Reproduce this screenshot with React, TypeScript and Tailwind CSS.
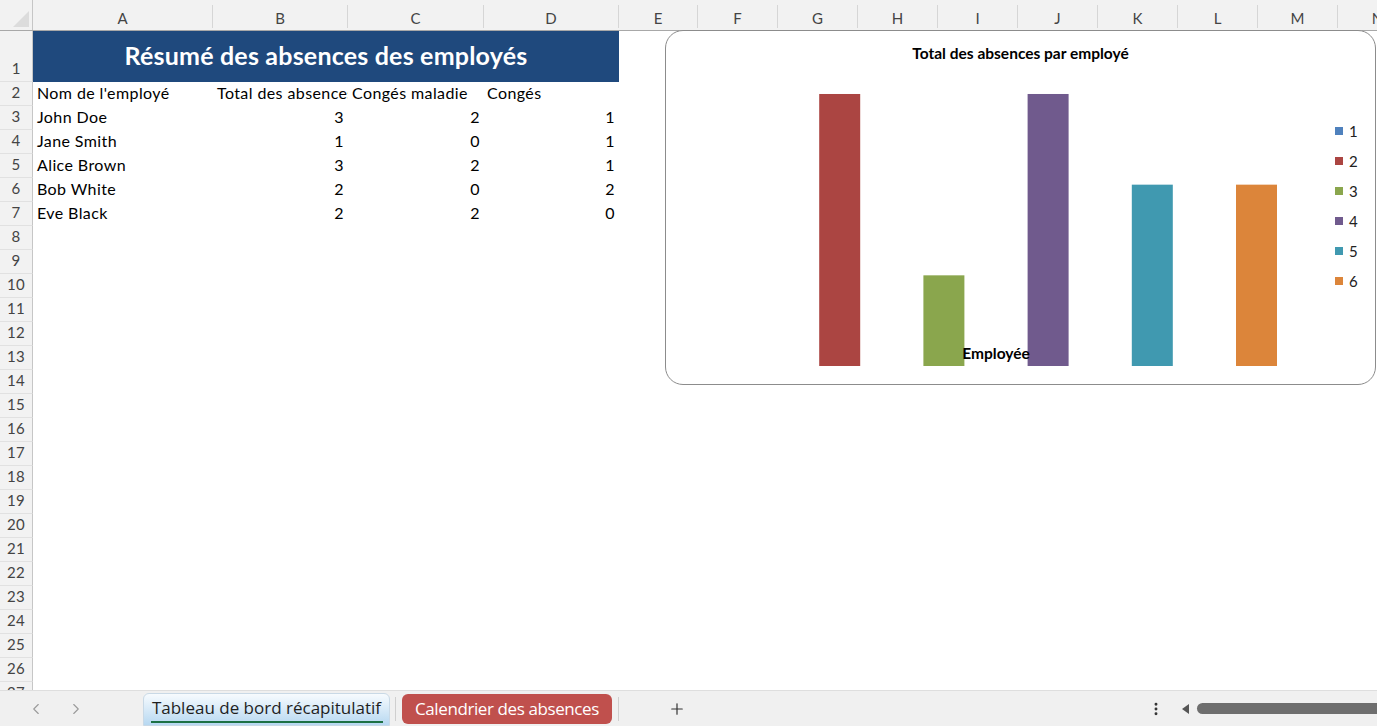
import { ChevronLeft, ChevronRight, Plus, MoreVertical } from 'lucide-react';

const cols = [
  { id: 'A', w: 'w-[180px]' },
  { id: 'B', w: 'w-[135px]' },
  { id: 'C', w: 'w-[136px]' },
  { id: 'D', w: 'w-[135px]' },
  { id: 'E', w: 'w-[79px]' },
  { id: 'F', w: 'w-[80px]' },
  { id: 'G', w: 'w-[80px]' },
  { id: 'H', w: 'w-[80px]' },
  { id: 'I', w: 'w-[80px]' },
  { id: 'J', w: 'w-[80px]' },
  { id: 'K', w: 'w-[80px]' },
  { id: 'L', w: 'w-[80px]' },
  { id: 'M', w: 'w-[80px]' },
  { id: 'N', w: 'w-[80px]' },
];

const employees = [
  { name: 'John Doe', total: 3, sick: 2, leave: 1 },
  { name: 'Jane Smith', total: 1, sick: 0, leave: 1 },
  { name: 'Alice Brown', total: 3, sick: 2, leave: 1 },
  { name: 'Bob White', total: 2, sick: 0, leave: 2 },
  { name: 'Eve Black', total: 2, sick: 2, leave: 0 },
];

const series = [
  { label: '1', color: '#4f81bd', value: 0 },
  { label: '2', color: '#ab4542', value: 3 },
  { label: '3', color: '#8aa64d', value: 1 },
  { label: '4', color: '#705a8d', value: 3 },
  { label: '5', color: '#4099b0', value: 2 },
  { label: '6', color: '#dc853a', value: 2 },
];

function RowHead({ n, h = 'h-[24px]' }: { n: number; h?: string }) {
  return (
    <div
      className={`${h} w-[33px] shrink-0 flex items-end justify-center pb-[3px] bg-[#f2f2f2] border-r border-r-[#c6c6c6] border-b border-b-[#e1e1e1] text-[15px] leading-[20px] text-[#444]`}
    >
      {n}
    </div>
  );
}

function Chart() {
  const base = 335;
  const unit = 90.67;
  return (
    <div className="absolute left-[665px] top-[30px] w-[711px] h-[355px] bg-white border border-[#8c8c8c] rounded-[18px]">
      <div className="absolute top-[11px] left-0 right-0 text-center text-[15.5px] font-bold text-black">
        Total des absences par employé
      </div>
      <svg className="absolute left-0 top-0" width="709" height="353">
        {series.map((s, i) => {
          const h = s.value * unit;
          return (
            <rect
              key={s.label}
              x={49 + i * 104.2}
              y={base - h}
              width={41}
              height={h}
              fill={s.color}
            />
          );
        })}
      </svg>
      <div className="absolute left-[286px] top-[311px] w-[88px] text-center text-[15.5px] font-bold text-black">
        Employée
      </div>
      <div className="absolute left-[669px] top-[90px] flex flex-col gap-[10px]">
        {series.map((s) => (
          <div key={s.label} className="h-[20px] flex items-center gap-[6px] text-[15px] text-[#222]">
            <span className="w-[8px] h-[8px]" style={{ background: s.color }} />
            <span>{s.label}</span>
          </div>
        ))}
      </div>
    </div>
  );
}

const cell = 'h-[24px] flex items-end pb-[3px] leading-[20px] whitespace-nowrap overflow-hidden';

export default function App() {
  const bodyRows = Array.from({ length: 25 }, (_, i) => i + 3);

  return (
    <div
      className="relative w-[1377px] h-[726px] overflow-hidden bg-white"
      style={{ fontFamily: 'Lato, "Noto Sans", sans-serif' }}
    >
      {/* Column headers */}
      <div className="flex h-[31px] bg-[#f2f2f2] border-b border-b-[#a8a8a8]">
        <div className="w-[33px] shrink-0 relative border-r border-r-[#c6c6c6]">
          <div className="absolute right-[3px] bottom-[3px] w-0 h-0 border-l-[16px] border-l-transparent border-b-[16px] border-b-[#dcdcdc]" />
        </div>
        {cols.map((c) => (
          <div key={c.id} className={`${c.w} shrink-0 flex items-end pb-[2px]`}>
            <div className="flex-1 text-center text-[15px] leading-[20px] text-[#444]">{c.id}</div>
            <div className="w-px h-[23px] bg-[#d6d6d6]" />
          </div>
        ))}
      </div>

      {/* Row 1 - title */}
      <div className="flex">
        <RowHead n={1} h="h-[51px]" />
        <div className="w-[586px] h-[51px] shrink-0 bg-[#1f497d] flex items-center justify-center pb-[1px]">
          <span className="text-white text-[25px] font-bold tracking-[0.2px]">Résumé des absences des employés</span>
        </div>
      </div>

      {/* Row 2 - headers */}
      <div className="flex text-[16px] tracking-[0.4px] text-black">
        <RowHead n={2} />
        <div className={`w-[180px] pl-[4px] ${cell}`}>Nom de l'employé</div>
        <div className={`w-[135px] pl-[4px] ${cell}`}>Total des absences</div>
        <div className={`w-[136px] pl-[4px] ${cell}`}>Congés maladie</div>
        <div className={`w-[135px] pl-[3px] ${cell}`}>Congés</div>
      </div>

      {/* Data rows and empty rows */}
      {bodyRows.map((n) => {
        const e = employees[n - 3];
        return (
          <div key={n} className="flex text-[16px] tracking-[0.4px] text-black">
            <RowHead n={n} />
            {e && (
              <>
                <div className={`w-[180px] pl-[4px] ${cell}`}>{e.name}</div>
                <div className={`w-[135px] justify-end pr-[4px] ${cell}`}>{e.total}</div>
                <div className={`w-[136px] justify-end pr-[4px] ${cell}`}>{e.sick}</div>
                <div className={`w-[135px] justify-end pr-[4px] ${cell}`}>{e.leave}</div>
              </>
            )}
          </div>
        );
      })}

      <Chart />

      {/* Sheet tabs bar */}
      <div className="absolute left-0 right-0 top-[690px] h-[36px] bg-[#f0f0f0] border-t border-t-[#dedede] flex items-center">
        <div className="w-[140px] flex items-center gap-[22px] pl-[27px] text-[#9a9a9a]">
          <ChevronLeft size={18} strokeWidth={1.5} />
          <ChevronRight size={18} strokeWidth={1.5} />
        </div>
        <div className="ml-[3px] h-[33px] self-end w-[247px] rounded-t-[6px] border border-[#c9d9e6] bg-gradient-to-b from-[#f7fbfe] to-[#b7d8f1] flex flex-col items-center justify-center">
          <span className="text-[17px] leading-[22px] text-[#1f1f1f] font-medium" style={{ fontFamily: '"Open Sans", sans-serif' }}>
            Tableau de bord récapitulatif
          </span>
          <div className="w-[232px] h-[2px] bg-[#1d7145] mt-[2px]" />
        </div>
        <div className="w-px h-[24px] bg-[#cfcfcf] ml-[5px]" />
        <div className="ml-[6px] h-[30px] w-[210px] rounded-[6px] bg-[#c0504d] flex items-center justify-center">
          <span className="text-[17px] text-white" style={{ fontFamily: '"Open Sans", sans-serif', letterSpacing: '-0.4px' }}>
            Calendrier des absences
          </span>
        </div>
        <div className="w-px h-[24px] bg-[#cfcfcf] ml-[6px]" />
        <div className="ml-[49px] text-[#333]">
          <Plus size={18} strokeWidth={1.6} />
        </div>
        <div className="ml-[462px] text-[#333]">
          <MoreVertical size={16} strokeWidth={2.4} />
        </div>
        <div className="ml-[18px] w-0 h-0 border-t-[5px] border-t-transparent border-b-[5px] border-b-transparent border-r-[7px] border-r-[#555]" />
        <div className="ml-[8px] flex-1 h-[11px] rounded-l-full bg-[#6e6e6e]" />
      </div>
    </div>
  );
}
